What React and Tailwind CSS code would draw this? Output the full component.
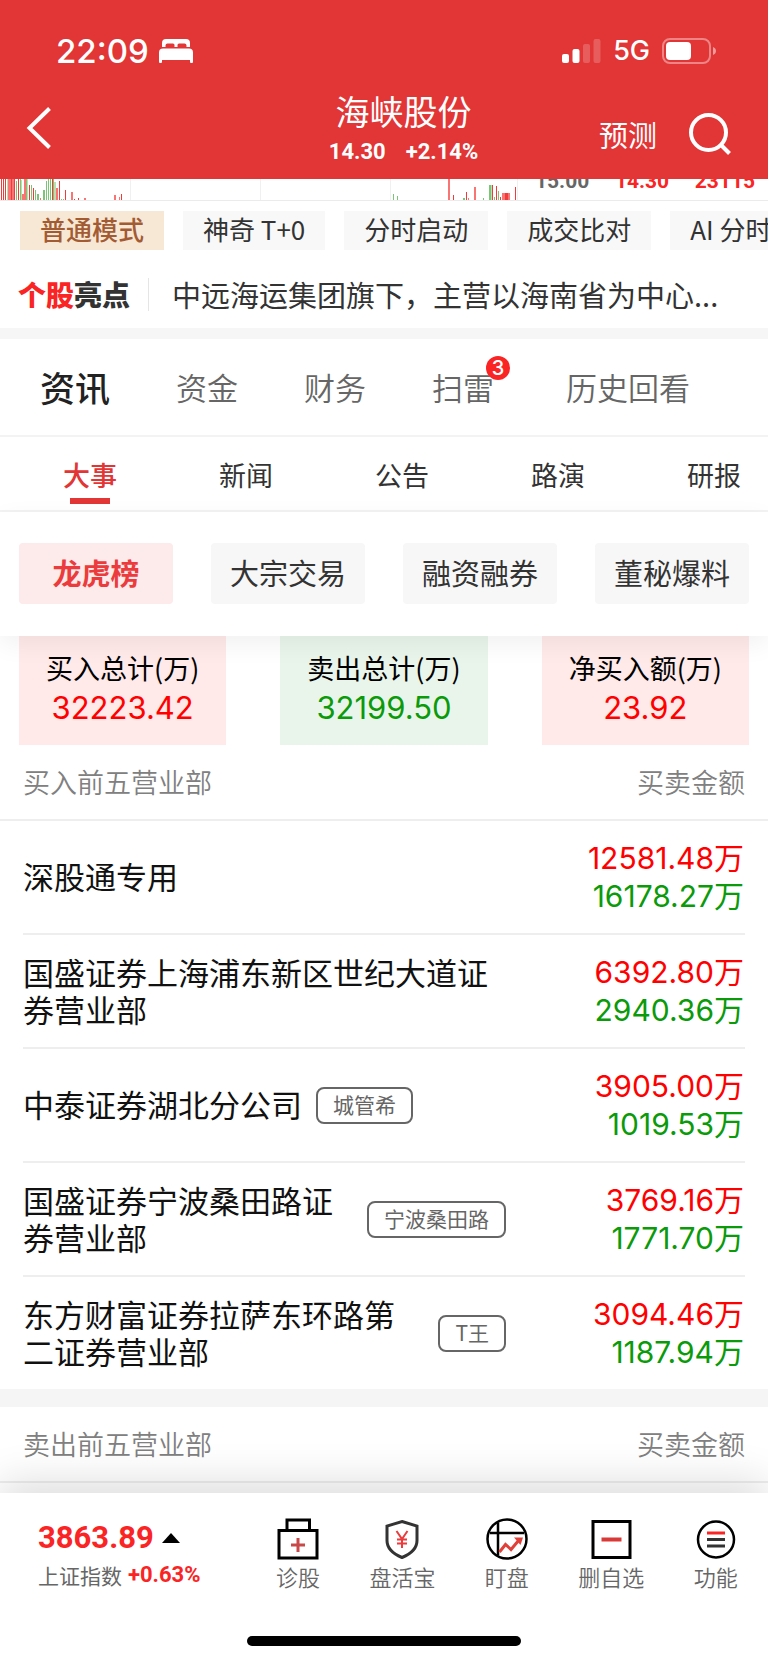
// ──────────────────────────────────────────────────
// App.jsx — Stock detail page (news / 龙虎榜 view)
// ──────────────────────────────────────────────────
// Top to bottom: red header, the tail of the minute
// chart, mode chips, highlight line, tabs, the
// buy/sell totals and the list of brokerages, and the
// bottom bar with the index quote.
// ──────────────────────────────────────────────────

// ── Data ──────────────────────────────────────────
const modes = ['普通模式', '神奇 T+0', '分时启动', '成交比对', 'AI 分时'];

const mainTabs = [
  { label: '资讯' },
  { label: '资金' },
  { label: '财务' },
  { label: '扫雷', badge: 3 },
  { label: '历史回看' },
];

const subTabs = ['大事', '新闻', '公告', '路演', '研报'];

const topics = ['龙虎榜', '大宗交易', '融资融券', '董秘爆料'];

const totals = [
  { label: '买入总计(万)', value: '32223.42', up: true },
  { label: '卖出总计(万)', value: '32199.50', up: false },
  { label: '净买入额(万)', value: '23.92', up: true },
];

const buyers = [
  { name: '深股通专用', buy: '12581.48万', sell: '16178.27万' },
  { name: '国盛证券上海浦东新区世纪大道证券营业部', buy: '6392.80万', sell: '2940.36万' },
  { name: '中泰证券湖北分公司', tag: '城管希', buy: '3905.00万', sell: '1019.53万' },
  { name: '国盛证券宁波桑田路证券营业部', tag: '宁波桑田路', buy: '3769.16万', sell: '1771.70万' },
  { name: '东方财富证券拉萨东环路第二证券营业部', tag: 'T王', buy: '3094.46万', sell: '1187.94万' },
];

// Volume bars: [x, width, height, colour]
const R = '#f23a3a';
const P = '#fb7474';
const G = '#7cc576';
const L = '#b5e2ae';
const bars = [
  [1, 1, 22, R], [3, 1, 22, R], [5, 1, 22, R], [7, 1, 22, L], [8, 1, 22, P], [9, 2, 22, P],
  [11, 1, 22, R], [12, 2, 22, P], [14, 1, 22, R], [16, 1, 20, G], [18, 1, 22, R], [20, 1, 22, G],
  [21, 1, 21, L], [22, 2, 7, P], [24, 2, 22, P], [26, 1, 22, G], [27, 1, 22, L], [29, 1, 16, R],
  [31, 1, 16, G], [33, 1, 13, R], [35, 1, 11, G], [37, 2, 7, G], [40, 1, 3, P], [42, 1, 1, G],
  [43, 2, 11, G], [46, 1, 20, G], [48, 1, 22, G], [50, 1, 22, G], [52, 1, 22, R], [53, 1, 22, G],
  [54, 2, 19, L], [56, 2, 13, P], [59, 1, 20, R], [61, 1, 2, G], [63, 1, 2, G], [65, 1, 11, R],
  [71, 2, 9, P], [74, 1, 2, R], [78, 1, 3, R], [84, 2, 3, P], [108, 1, 1, R], [114, 2, 6, P],
  [119, 1, 4, P], [121, 1, 7, R], [393, 1, 7, G], [397, 1, 5, G], [417, 3, 1, L], [448, 2, 22, P],
  [453, 1, 6, R], [463, 2, 3, G], [466, 1, 9, R], [468, 1, 3, P], [474, 2, 14, P], [483, 1, 3, G],
  [485, 3, 1, L], [489, 2, 16, G], [491, 1, 16, L], [492, 1, 16, R], [494, 1, 4, G], [496, 1, 15, R],
  [498, 1, 10, G], [500, 1, 4, R], [502, 3, 8, P], [505, 3, 8, R], [508, 2, 8, P], [515, 1, 14, R],
];

// ── Status bar ────────────────────────────────────
const StatusBar = () => (
  <div className="flex justify-between items-center pl-14 pr-[52px] pt-[34px]">
    <div className="flex items-center gap-[10px]">
      <span className="font-[Inter] text-[33px] leading-[34px] font-medium">22:09</span>
      {/* Sleep focus bed */}
      <svg width="35" height="24" viewBox="0 0 35 24" fill="currentColor">
        <path d="M3 8V4a4 4 0 0 1 4-4h20a4 4 0 0 1 4 4v4h-3.500V6.500a2 2 0 0 0-2-2h-5.500a1.500 1.500 0 0 0-1.500 1.500V8h-3V6a1.500 1.500 0 0 0-1.500-1.500H8.500a2 2 0 0 0-2 2V8z" />
        <path d="M0 23V13.500a4 4 0 0 1 4-4h26a4 4 0 0 1 4 4V23a1 1 0 0 1-1 1h-1a1 1 0 0 1-1-1v-2H3v2a1 1 0 0 1-1 1H1a1 1 0 0 1-1-1z" />
      </svg>
    </div>
    <div className="flex items-center gap-3">
      {/* Signal strength */}
      <svg width="39" height="24" viewBox="0 0 39 24" fill="currentColor">
        <rect x="0" y="15" width="7" height="9" rx="2" />
        <rect x="10.500" y="10" width="7" height="14" rx="2" />
        <rect x="21" y="5" width="7" height="19" rx="2" opacity=".2" />
        <rect x="31.500" y="0" width="7" height="24" rx="2" opacity=".2" />
      </svg>
      <span className="font-[Inter] text-[27px] leading-[34px] font-medium">5G</span>
      {/* Battery */}
      <svg width="54" height="26" viewBox="0 0 54 26">
        <rect x="1" y="1" width="47" height="24" rx="7" fill="none" stroke="#fff" strokeOpacity=".4" strokeWidth="2" />
        <rect x="4" y="4" width="25" height="18" rx="4" fill="#fff" />
        <path d="M51 9c1.800.7 3 2.200 3 4s-1.200 3.300-3 4z" fill="#fff" fillOpacity=".5" />
      </svg>
    </div>
  </div>
);

// ── Header ────────────────────────────────────────
const Header = () => (
  <header className="bg-[#e23536] text-white">
    <StatusBar />
    <div className="grid grid-cols-[1fr_auto_1fr] items-center h-[111px] pt-2 pl-[26px] pr-[37px]">
      <button aria-label="返回" className="w-9">
        <svg width="26" height="42" viewBox="0 0 26 42" fill="none" stroke="currentColor" strokeWidth="4">
          <path d="M23.500 1.500 3.500 21l20 19.500" />
        </svg>
      </button>
      <div className="pl-[50px] text-center">
        <h1 className="text-[34px] leading-[48px]">海峡股份</h1>
        <p className="flex gap-5 justify-center font-[Roboto] font-bold text-[22px] leading-[34px]">
          <span>14.30</span>
          <span>+2.14%</span>
        </p>
      </div>
      <div className="flex justify-end items-center gap-8 pt-3">
        <button className="text-[29px] leading-10">预测</button>
        <button aria-label="搜索">
          <svg width="42" height="42" viewBox="0 0 42 42" fill="none" stroke="currentColor" strokeWidth="4">
            <circle cx="19.500" cy="19.500" r="17.500" />
            <path d="m31.500 31.500 9 9" />
          </svg>
        </button>
      </div>
    </div>
  </header>
);

// ── Chart tail ────────────────────────────────────
// Only the last pixels of the volume chart and of the
// tick list stay visible under the header.
const ChartTail = () => (
  <div className="flex h-[22px] overflow-hidden border-b border-[#ebebeb]">
    <svg width="518" height="22" viewBox="0 0 518 22" className="shrink-0" shapeRendering="crispEdges">
      {[130, 260, 390, 517].map((x) => (
        <rect key={x} x={x} y="0" width="1" height="22" fill="#f0f0f0" />
      ))}
      {bars.map(([x, w, h, fill], i) => (
        <rect key={i} x={x} y={22 - h} width={w} height={h} fill={fill} />
      ))}
    </svg>
    <div className="flex flex-1 items-end justify-between pl-[17px] pr-[13px] pb-[7px] font-[Roboto] font-bold text-[21px] leading-6 text-[#fa2424]">
      <span className="text-[#666]">15.00</span>
      <span>14.30</span>
      <span>23115</span>
    </div>
  </div>
);

// ── Mode chips ────────────────────────────────────
const Modes = () => (
  <div className="flex gap-[19px] pl-5 pt-[10px] overflow-hidden text-[26px] leading-9">
    {modes.map((mode, i) => (
      <button
        key={mode}
        className={
          i === 0
            ? 'shrink-0 px-5 pb-[3px] bg-[#f7e8d5] text-[#a35b33] font-medium'
            : 'shrink-0 px-5 pb-[3px] bg-[#f8f8f8] text-[#333]'
        }
      >
        {mode}
      </button>
    ))}
  </div>
);

// ── Highlight line ────────────────────────────────
const Highlight = () => (
  <div className="flex items-center h-[78px] pt-[10px] pl-[18px] pr-[34px]">
    <h2 className="shrink-0 text-[28px] leading-8 font-black text-[#333]">
      <span className="text-[#fa2424]">个股</span>亮点
    </h2>
    <div className="shrink-0 w-px h-[33px] bg-[#e5e5e5] ml-[18px] mr-[23px]" />
    <p className="flex-1 truncate text-[29px] leading-10 text-[#333]">
      中远海运集团旗下，主营以海南省为中心...
    </p>
  </div>
);

// ── Main tabs ─────────────────────────────────────
const MainTabs = () => (
  <nav className="flex items-center gap-[66px] h-[98px] pl-10 border-b-2 border-[#f3f3f3]">
    {mainTabs.map((tab, i) => (
      <button
        key={tab.label}
        className={
          i === 0
            ? 'shrink-0 text-[35px] leading-[50px] font-medium text-[#222]'
            : 'relative shrink-0 text-[31px] leading-[50px] text-[#666] font-[350] last:pl-[6px]'
        }
      >
        {tab.label}
        {tab.badge && (
          <span className="absolute -top-[6px] left-[54px] w-6 h-6 rounded-full bg-[#fa2424] text-white font-[Inter] text-[20px] leading-6 font-medium text-center">
            {tab.badge}
          </span>
        )}
      </button>
    ))}
  </nav>
);

// ── Sub tabs ──────────────────────────────────────
const SubTabs = () => (
  <nav className="grid grid-flow-col auto-cols-[156px] pl-3 h-[75px] overflow-hidden border-b-2 border-[#f3f3f3]">
    {subTabs.map((tab, i) => (
      <button
        key={tab}
        className={
          i === 0
            ? 'flex flex-col items-center pt-[18px] text-[27px] leading-10 text-[#e23536] font-medium'
            : 'flex flex-col items-center pt-[18px] text-[27px] leading-10 text-[#333]'
        }
      >
        {tab}
        {i === 0 && <span className="w-10 h-[6px] mt-[3px] bg-[#e23536]" />}
      </button>
    ))}
  </nav>
);

// ── Topic buttons ─────────────────────────────────
const Topics = () => (
  <div className="relative grid grid-cols-4 gap-[38px] px-[19px] pt-[31px] pb-8 shadow-[0_8px_24px_rgba(0,0,0,0.06)]">
    {topics.map((topic, i) => (
      <button
        key={topic}
        className={
          i === 0
            ? 'h-[61px] pb-1 rounded bg-[#fdeaea] text-[29px] leading-10 font-bold text-[#ec3b3c]'
            : 'h-[61px] pb-1 rounded bg-[#f7f7f7] text-[29px] leading-10 text-[#333]'
        }
      >
        {topic}
      </button>
    ))}
  </div>
);

// ── Buy / sell totals ─────────────────────────────
const Totals = () => (
  <dl className="grid grid-cols-3 gap-[54px] px-[19px] text-center">
    {totals.map((t) => (
      <div
        key={t.label}
        className={t.up ? 'h-[109px] pt-[13px] bg-[#ffe9e9]' : 'h-[109px] pt-[13px] bg-[#e9f5ea]'}
      >
        <dt className="text-[27px] leading-[38px] text-black">{t.label}</dt>
        <dd
          className={
            t.up
              ? 'font-[Inter] text-[31px] leading-[42px] text-[#ff0000]'
              : 'font-[Inter] text-[31px] leading-[42px] text-[#0a9a0a]'
          }
        >
          {t.value}
        </dd>
      </div>
    ))}
  </dl>
);

// ── Brokerage section title ───────────────────────
const SectionTitle = ({ title }) => (
  <div className="flex items-center justify-between h-[76px] px-[23px] border-b-2 border-[#eee] text-[27px] leading-10 text-[#808080] font-[350]">
    <h3>{title}</h3>
    <span>买卖金额</span>
  </div>
);

// ── Brokerage rows ────────────────────────────────
const BuyerList = () => (
  <ul className="px-[23px]">
    {buyers.map((b) => (
      <li
        key={b.name}
        className="flex items-center justify-between h-[114px] last:h-28 border-b-2 border-[#eee] last:border-b-0"
      >
        <div className="flex flex-1 items-center gap-[14px] max-w-[483px]">
          <p className="pb-[3px] text-[31px] leading-[37px] text-[#111]">{b.name}</p>
          {b.tag && (
            <span className="shrink-0 px-[15px] pb-[3px] rounded-lg border-2 border-[#666] text-[21px] leading-[30px] text-[#666]">
              {b.tag}
            </span>
          )}
        </div>
        <div className="shrink-0 pr-px text-right font-[Inter,'Noto_Sans_CJK_SC',sans-serif] text-[30px] leading-[38px]">
          <p className="text-[#ff0000]">{b.buy}</p>
          <p className="text-[#0a9a0a]">{b.sell}</p>
        </div>
      </li>
    ))}
  </ul>
);

// ── Bottom bar icons ──────────────────────────────
const KitIcon = () => (
  <svg width="42" height="42" viewBox="0 0 42 42" fill="none" stroke="#000" strokeWidth="3">
    <path d="M10 12V2h22.500v10" />
    <path d="M2 12.500h38V40H2z" />
    <path d="M21 20v14M14 27h14" stroke="#c9484a" />
  </svg>
);

const ShieldIcon = () => (
  <svg width="42" height="42" viewBox="0 0 42 42" fill="none" stroke="#333" strokeWidth="3">
    <path d="M21 3.500 36 8v14.500c0 8-6.500 13.500-15 17-8.500-3.500-15-9-15-17V8z" />
    <path d="m15.500 13 5.500 8 5.500-8M21 21v9M16 21.500h10M16 25.500h10" stroke="#ea3b3d" strokeWidth="2" />
  </svg>
);

const WatchIcon = () => (
  <svg width="42" height="42" viewBox="0 0 42 42" fill="none" stroke="#000" strokeWidth="2.500">
    <circle cx="21" cy="21" r="19.500" />
    <path d="M12 4.500v33M4 15h34" />
    <path d="m13.500 34 6-7.500 5.500 5 8-9.500" stroke="#e0403a" strokeWidth="3" />
    <path d="M28 19.500h9L34.500 27z" fill="#e0403a" stroke="none" />
  </svg>
);

const RemoveIcon = () => (
  <svg width="42" height="42" viewBox="0 0 42 42" fill="none" stroke="#000" strokeWidth="3">
    <path d="M3 3.500h37v36H3z" />
    <path d="M11.500 21.500h20" stroke="#d93a37" strokeWidth="4" />
  </svg>
);

const MenuIcon = () => (
  <svg width="42" height="42" viewBox="0 0 42 42" fill="none" stroke="#000" strokeWidth="2.500">
    <circle cx="21" cy="21.500" r="18" />
    <path d="M12 15h18" stroke="#fa2424" strokeWidth="3" />
    <path d="M12 21.500h18M12 28h18" stroke="#333" strokeWidth="3" />
  </svg>
);

const actions = [
  { label: '诊股', Icon: KitIcon },
  { label: '盘活宝', Icon: ShieldIcon },
  { label: '盯盘', Icon: WatchIcon },
  { label: '删自选', Icon: RemoveIcon },
  { label: '功能', Icon: MenuIcon },
];

// ── Bottom bar ────────────────────────────────────
const BottomBar = () => (
  <footer className="relative bg-white pb-[17px] shadow-[0_-10px_40px_rgba(0,0,0,0.14)]">
    <div className="flex h-[143px]">
      <div className="w-[32%] pl-[38px] pt-[25px]">
        <p className="flex items-center gap-2 font-[Roboto] font-bold text-[31px] leading-10 text-[#fa2424]">
          3863.89
          <svg width="18" height="10" viewBox="0 0 18 10">
            <path d="M0 10 9 0l9 10z" fill="#000" />
          </svg>
        </p>
        <p className="flex items-center gap-[6px] text-[21px] leading-[34px] text-[#666] whitespace-nowrap">
          上证指数
          <span className="font-[Roboto] font-bold text-[22px] text-[#fa2424]">+0.63%</span>
        </p>
      </div>
      <div className="flex-1 grid grid-cols-5">
        {actions.map(({ label, Icon }) => (
          <button
            key={label}
            className="flex flex-col items-center pt-[25px] text-[22px] leading-8 text-[#666] font-[350]"
          >
            <Icon />
            <span>{label}</span>
          </button>
        ))}
      </div>
    </div>
    {/* Home indicator */}
    <div className="w-[274px] h-[10px] mx-auto rounded-full bg-black" />
  </footer>
);

// ── Page ──────────────────────────────────────────
const App = () => (
  <div className="bg-white font-['Noto_Sans_CJK_SC',sans-serif] overflow-hidden">
    <Header />
    <ChartTail />
    <Modes />
    <Highlight />
    <div className="h-[11px] bg-[#f6f6f6]" />
    <MainTabs />
    <SubTabs />
    <Topics />
    <Totals />
    <SectionTitle title="买入前五营业部" />
    <BuyerList />
    <div className="h-[18px] bg-[#f5f5f5]" />
    <SectionTitle title="卖出前五营业部" />
    <div className="h-[10px]" />
    <BottomBar />
  </div>
);

export default App;
